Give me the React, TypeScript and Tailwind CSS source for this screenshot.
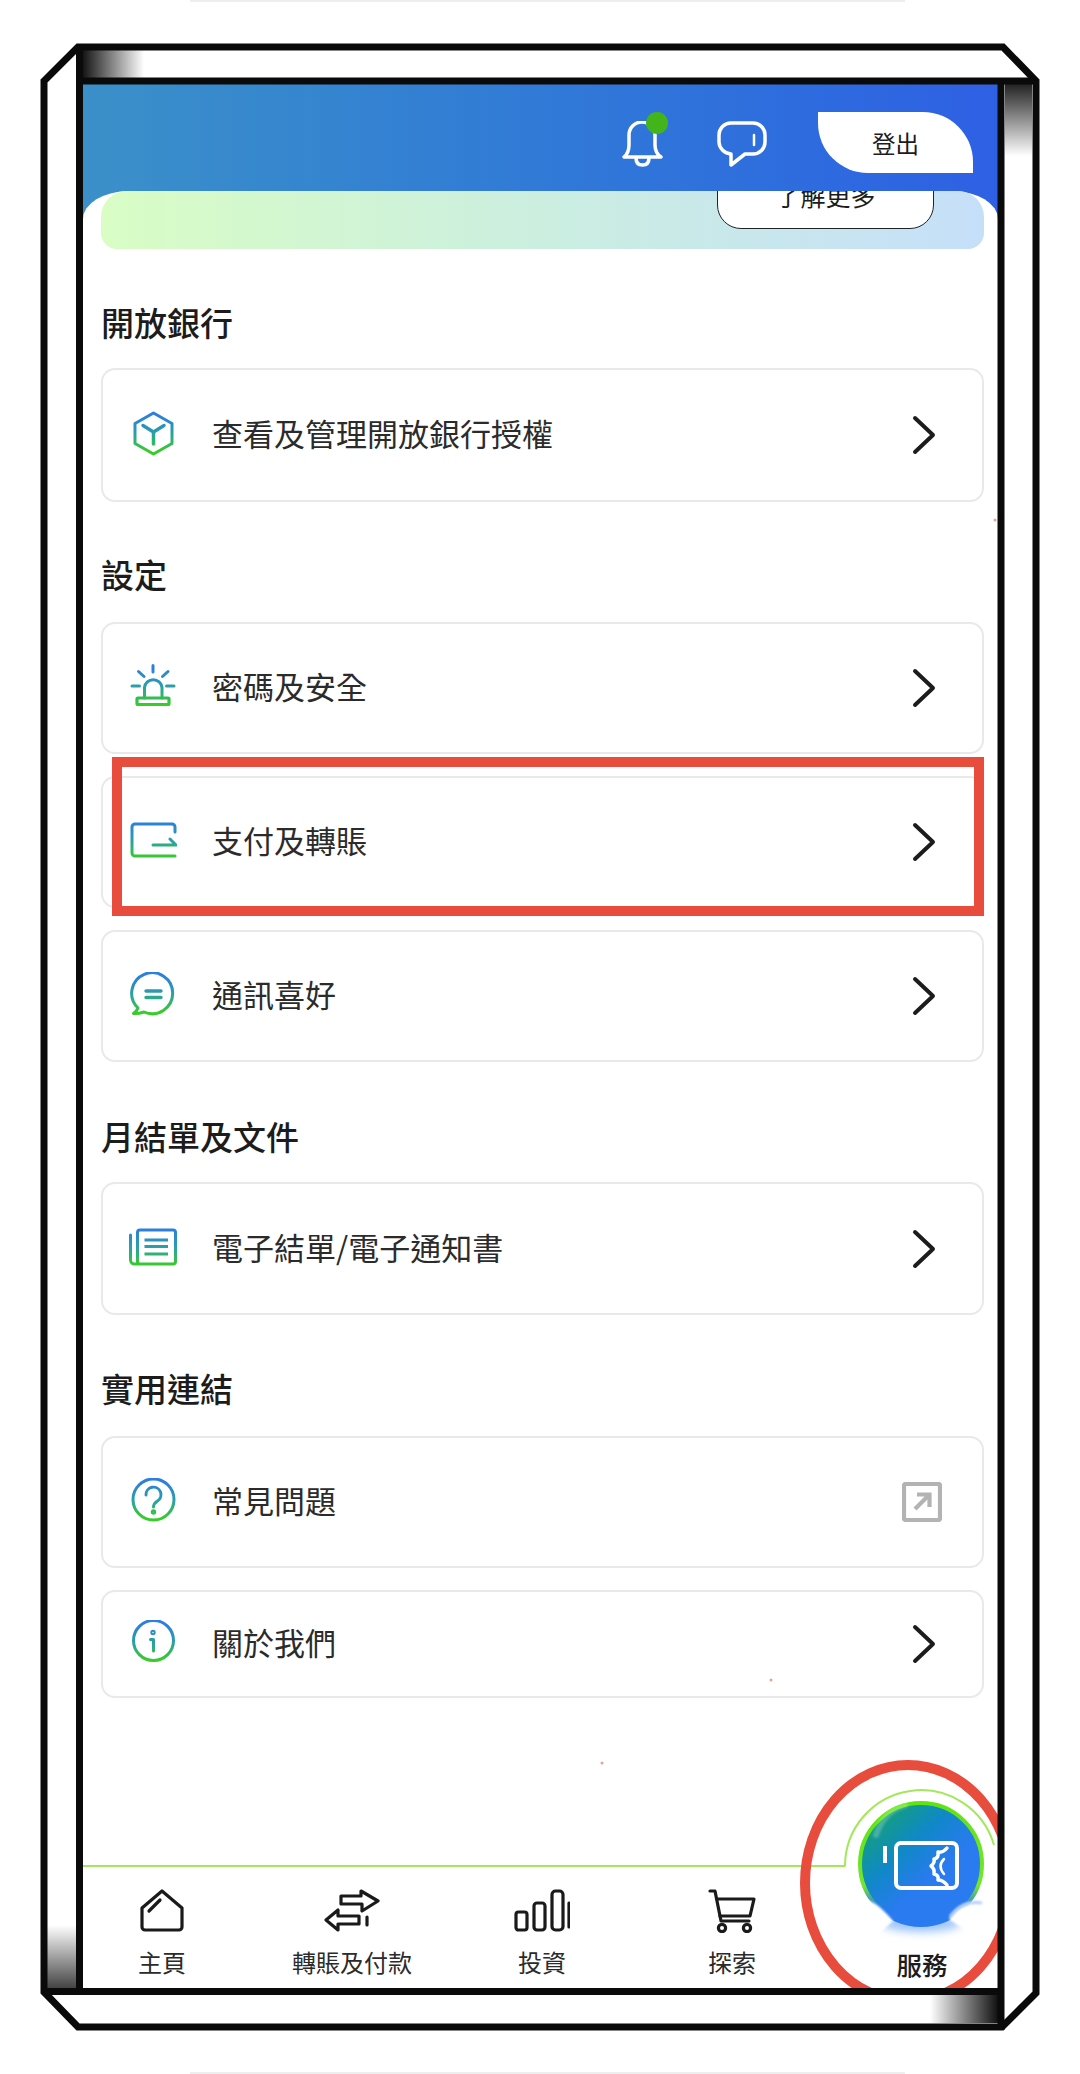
import { ReactNode, useId } from "react";

function GradIcon({ children }: { children: (stroke: string) => ReactNode }) {
  const id = useId().replace(/:/g, "");
  return (
    <svg width="48" height="48" viewBox="0 0 48 48" fill="none" strokeLinecap="round" strokeLinejoin="round" strokeWidth="3">
      <defs>
        <linearGradient id={id} gradientUnits="userSpaceOnUse" x1="0" y1="4" x2="0" y2="40">
          <stop offset="0" stopColor="#2c7fdc" />
          <stop offset="0.5" stopColor="#2a9fa8" />
          <stop offset="1" stopColor="#38cb2a" />
        </linearGradient>
      </defs>
      {children(`url(#${id})`)}
    </svg>
  );
}

const CubeIcon = () => (
  <GradIcon>
    {(s) => (
      <g stroke={s}>
        <path d="M24.5 2 L43 12.5 V32.5 L24.5 43 L6 32.5 V12.5 Z" />
        <path d="M14 14.5 L24.5 21 L35 14.5 M24.5 21 V33" strokeWidth="3.5" />
      </g>
    )}
  </GradIcon>
);

const SirenIcon = () => (
  <GradIcon>
    {(s) => (
      <g stroke={s}>
        <path d="M24 1.5 V8 M9.5 7.5 L15 12.5 M39 7.5 L33.5 12.5 M3 22 H10.5 M37.5 22 H45" />
        <path d="M15.5 34 V23.5 A8.8 8.8 0 0 1 33 23.5 V34" />
        <rect x="8" y="34" width="32" height="6.5" rx="1" strokeWidth="3.2" />
      </g>
    )}
  </GradIcon>
);

const PayIcon = () => (
  <GradIcon>
    {(s) => (
      <g stroke={s}>
        <path d="M46 14 V9 A3 3 0 0 0 43 6 H6 A3 3 0 0 0 3 9 V35 A3 3 0 0 0 6 38 H46" />
        <path d="M24 27 H47 L41 21" />
      </g>
    )}
  </GradIcon>
);

const ChatIcon = () => (
  <GradIcon>
    {(s) => (
      <g stroke={s}>
        <path d="M9 36 A20.5 20.5 0 1 1 15 40 Q9 42 4.5 41.5 Q8 39 9 36 Z" />
        <path d="M17 19 H32 M17 25.5 H32" strokeWidth="3.4" />
      </g>
    )}
  </GradIcon>
);

const DocIcon = () => (
  <GradIcon>
    {(s) => (
      <g stroke={s}>
        <rect x="8.5" y="5" width="38" height="34" rx="2.5" />
        <path d="M1.5 10 V35 A4 4 0 0 0 5.5 39 H9" />
        <path d="M15.5 15 H39 M15.5 21.5 H39 M15.5 29 H39" strokeLinecap="butt" />
      </g>
    )}
  </GradIcon>
);

const QuestionIcon = () => (
  <GradIcon>
    {(s) => (
      <g stroke={s}>
        <circle cx="24.5" cy="21.5" r="20.5" />
        <path d="M17 17 A7.5 7.5 0 1 1 28.5 23 C25.5 25 24.5 26 24.5 29" />
        <circle cx="24.5" cy="34" r="1.2" />
      </g>
    )}
  </GradIcon>
);

const InfoIcon = () => (
  <GradIcon>
    {(s) => (
      <g stroke={s}>
        <circle cx="24.5" cy="20.5" r="20" />
        <circle cx="24" cy="12.5" r="1" strokeWidth="3.4" />
        <path d="M21.5 19.5 H24.5 V31" />
      </g>
    )}
  </GradIcon>
);

const Chevron = () => (
  <svg width="40" height="40" viewBox="0 0 40 40" fill="none" stroke="#1c1c1c" strokeWidth="4" strokeLinecap="round" strokeLinejoin="round">
    <path d="M13 3 L31 20 L13 37" />
  </svg>
);

const ExternalIcon = () => (
  <svg width="40" height="40" viewBox="0 0 40 40" fill="none" stroke="#b3b3b3" strokeWidth="4.2">
    <rect x="2" y="2" width="36" height="36" rx="1.5" />
    <path d="M13 27 L26 14 M15 12.5 H27.5 V25" />
  </svg>
);

function HomeIcon() {
  return (
    <svg width="44" height="44" viewBox="0 0 44 44" fill="none" stroke="#1a1a1a" strokeWidth="3.2" strokeLinejoin="round" strokeLinecap="round">
      <path d="M22 2 L42 19 V38 A3 3 0 0 1 39 41 H5 A3 3 0 0 1 2 38 V19 Z" />
      <path d="M9 22 L20 11" />
    </svg>
  );
}

function TransferIcon() {
  return (
    <svg width="56" height="44" viewBox="0 0 56 44" fill="none" stroke="#1a1a1a" strokeWidth="3.2" strokeLinejoin="round" strokeLinecap="round">
      <path d="M17 7 H37 V2 L54 12 L38 22 V15 H17 Z" />
      <path d="M2 31 L14 21 V27 H35 V35 H14 V41 Z" />
      <path d="M43 28 V36" />
    </svg>
  );
}

function BarsIcon() {
  return (
    <svg width="56" height="44" viewBox="0 0 56 44" fill="none" stroke="#1a1a1a" strokeWidth="3.2" strokeLinecap="round">
      <rect x="2" y="23" width="11" height="18" rx="2.5" />
      <rect x="20" y="14" width="11" height="27" rx="3" />
      <rect x="38" y="2" width="11" height="39" rx="3.5" />
      <path d="M55 14 V38" />
    </svg>
  );
}

function CartIcon() {
  return (
    <svg width="48" height="44" viewBox="0 0 48 44" fill="none" stroke="#1a1a1a" strokeWidth="3.2" strokeLinejoin="round" strokeLinecap="round">
      <path d="M2 2 H7 L13 32 H41" />
      <path d="M9 10 H46 L42 27 H12" />
      <circle cx="14" cy="39" r="3.6" />
      <circle cx="39" cy="39" r="3.6" />
    </svg>
  );
}

function ServiceButton() {
  return (
    <svg className="absolute left-[707px] top-[-115px]" width="208" height="238" viewBox="790 1750 208 238" fill="none">
      <defs>
        <linearGradient id="fabFill" x1="0.15" y1="0.05" x2="0.75" y2="0.7">
          <stop offset="0" stopColor="#14a36f" />
          <stop offset="0.45" stopColor="#1088c8" />
          <stop offset="0.8" stopColor="#2a7af0" />
        </linearGradient>
        <linearGradient id="fabEdge" x1="0" y1="0" x2="0" y2="1">
          <stop offset="0" stopColor="#5fe40f" />
          <stop offset="0.68" stopColor="#74e62c" />
          <stop offset="0.85" stopColor="#2a7af0" />
        </linearGradient>
        <filter id="fabBlur" x="-30%" y="-60%" width="160%" height="220%">
          <feGaussianBlur stdDeviation="4" />
        </filter>
        <filter id="fabSoft" x="-30%" y="-30%" width="160%" height="160%">
          <feGaussianBlur stdDeviation="1.2" />
        </filter>
      </defs>
      <path d="M845 1866 A76 76 0 0 1 994 1845" stroke="#a3e85a" strokeWidth="2" />
      <ellipse cx="921" cy="1923" rx="40" ry="9" fill="#9cc4f7" filter="url(#fabBlur)" />
      <circle cx="921" cy="1864" r="61" fill="url(#fabFill)" stroke="url(#fabEdge)" strokeWidth="4" />
      <path d="M876 1835 Q884 1811 905 1805" stroke="#ffffff" strokeOpacity="0.22" strokeWidth="6" strokeLinecap="round" filter="url(#fabSoft)" />
      <path d="M852 1899 C868 1896 880 1905 893 1921 L872 1940 H852 Z" fill="#ffffff" filter="url(#fabSoft)" />
      <path d="M949 1919 C956 1908 966 1900 988 1902 V1932 H968 Z" fill="#ffffff" filter="url(#fabSoft)" />
      <path d="M950 1917 C957 1907 968 1901 982 1903" stroke="#b5d0f6" strokeWidth="3" filter="url(#fabSoft)" />
      <g stroke="#ffffff" strokeWidth="4" strokeLinecap="round" strokeLinejoin="round">
        <rect x="896" y="1843" width="61" height="45" rx="5" />
        <path d="M885 1846 V1863" strokeWidth="4" strokeLinecap="butt" />
        <path d="M947 1848 Q943 1853 938 1852 Q939 1858 934 1859 Q935 1863 931 1866 Q935 1869 934 1874 Q939 1875 938 1880 Q943 1880 947 1885" strokeWidth="3.5" />
        <path d="M944 1859 Q937 1866 944 1874" strokeWidth="2.5" />
      </g>
      <ellipse cx="908" cy="1883" rx="103" ry="118" stroke="#e74c3c" strokeWidth="10" />
    </svg>
  );
}

function DeviceFrame() {
  return (
    <svg className="absolute inset-0 pointer-events-none" width="1080" height="2074" viewBox="0 0 1080 2074" fill="none">
      <defs>
        <linearGradient id="shadeTL" x1="0" y1="0" x2="1" y2="0">
          <stop offset="0" stopColor="#111111" />
          <stop offset="1" stopColor="#ffffff" />
        </linearGradient>
        <linearGradient id="shadeTR" x1="0" y1="0" x2="0" y2="1">
          <stop offset="0" stopColor="#222222" />
          <stop offset="1" stopColor="#ffffff" />
        </linearGradient>
        <linearGradient id="shadeBL" x1="0" y1="0" x2="0" y2="1">
          <stop offset="0" stopColor="#ffffff" />
          <stop offset="1" stopColor="#444444" />
        </linearGradient>
        <linearGradient id="shadeBR" x1="0" y1="0" x2="1" y2="0">
          <stop offset="0" stopColor="#ffffff" />
          <stop offset="1" stopColor="#111111" />
        </linearGradient>
      </defs>
      <rect x="82" y="50" width="62" height="28" fill="url(#shadeTL)" />
      <rect x="1005" y="84" width="27" height="72" fill="url(#shadeTR)" />
      <rect x="47" y="1925" width="29" height="63" fill="url(#shadeBL)" />
      <rect x="930" y="1995" width="68" height="28" fill="url(#shadeBR)" />
      <g stroke="#0a0a0a" strokeWidth="7">
        <path d="M78 47 H1003 L1036 81 V1993 L1002 2027 H78 L44 1992 V81 Z" strokeLinejoin="miter" />
        <path d="M79.500 47 V1991 M79 81 H1036 M44 1991.500 H1001 M1001 84 V2030" />
      </g>
      <rect x="190" y="0" width="715" height="2" fill="#eeeeee" />
      <rect x="190" y="2072" width="715" height="2" fill="#eeeeee" />
      <circle cx="771" cy="1680" r="1.5" fill="#e9a29a" />
      <circle cx="602" cy="1763" r="1.5" fill="#e9a29a" />
      <circle cx="995" cy="520" r="1.5" fill="#e9a29a" />
    </svg>
  );
}

function Row({ icon, label, height, right }: { icon: ReactNode; label: string; height: string; right?: ReactNode }) {
  return (
    <div className={`${height} flex items-center rounded-[14px] border-2 border-[#e9e9e9] bg-white pl-[26px] pr-[40px]`}>
      <div className="w-[48px] h-[48px] shrink-0">{icon}</div>
      <span className="ml-[35px] flex-1 pb-[4px] text-[31px] leading-[44px] text-[#2b2b2b]">{label}</span>
      {right ?? <Chevron />}
    </div>
  );
}

function Title({ text, className }: { text: string; className: string }) {
  return <h2 className={`${className} h-[44px] text-[33px] leading-[38px] font-medium text-[#1c1c1c]`}>{text}</h2>;
}

function NavItem({ icon, label }: { icon: ReactNode; label: string }) {
  return (
    <div className="flex flex-col items-center">
      <div className="h-[44px] flex items-center justify-center">{icon}</div>
      <span className="mt-[14px] text-[24px] leading-[30px] text-[#2b2b2b]">{label}</span>
    </div>
  );
}

export default function App() {
  return (
    <div className="relative w-[1080px] h-[2074px] overflow-hidden bg-white pt-[84px] pl-[83px] font-['Noto_Sans_CJK_TC','Noto_Sans',sans-serif]">
      <div className="relative w-[915px] h-[1904px] flex flex-col overflow-hidden bg-white">
        {/* header */}
        <div className="h-[137px] shrink-0 bg-linear-to-r from-[#3b90c8] to-[#2e60e4] flex justify-end items-start pt-[28px] pr-[25px]">
          <div className="relative w-[40px] h-[46px] mt-[9px]">
            <svg width="42" height="46" viewBox="0 0 42 46" fill="none" stroke="#ffffff" strokeWidth="3.5" strokeLinejoin="round" strokeLinecap="round">
              <path d="M2 36 Q7 32 7 24 V14 A13 13 0 0 1 33 14 V24 Q33 32 39 36 Z" />
              <path d="M14 37 Q14 44 20.500 44 Q27 44 27 37" />
            </svg>
            <div className="absolute -top-[9px] left-[24px] w-[22px] h-[22px] rounded-full bg-[#43b51b]" />
          </div>
          <svg className="ml-[55px] mt-[9px]" width="50" height="46" viewBox="0 0 50 46" fill="none" stroke="#ffffff" strokeWidth="3.5" strokeLinejoin="round" strokeLinecap="round">
            <path d="M14 2 H36 A12 12 0 0 1 48 14 V21 A12 12 0 0 1 36 33 H28 L14 44 V33 A12.500 12.500 0 0 1 2 21 V14 A12 12 0 0 1 14 2 Z" />
            <path d="M37 14 V24" strokeWidth="2.5" />
          </svg>
          <button className="ml-[51px] w-[155px] h-[61px] bg-white rounded-tr-[50px] rounded-bl-[50px] text-[23.5px] leading-[58px] text-[#1c1c1c]">
            登出
          </button>
        </div>

        {/* content */}
        <div className="-mt-[30px] flex-1 bg-white rounded-tl-[46px_28px] rounded-tr-[46px_28px] pl-[18px] pr-[14px]">
          <div className="h-[58px] overflow-hidden rounded-t-[26px] rounded-b-[16px] bg-linear-to-r from-[#d9fdc4] via-[#cbeee0] to-[#c6dff9] flex justify-end pr-[50px]">
            <div className="-mt-[24px] w-[217px] h-[62px] shrink-0 rounded-[24px] border border-[#222222] bg-white text-center text-[25px] leading-[54px] text-[#1c1c1c]">
              了解更多
            </div>
          </div>

          <Title text="開放銀行" className="mt-[54px] mb-[21px]" />
          <Row icon={<CubeIcon />} label="查看及管理開放銀行授權" height="h-[134px]" />

          <Title text="設定" className="mt-[53px] mb-[23px]" />
          <div className="flex flex-col gap-[22px]">
            <Row icon={<SirenIcon />} label="密碼及安全" height="h-[132px]" />
            <Row icon={<PayIcon />} label="支付及轉賬" height="h-[132px]" />
            <Row icon={<ChatIcon />} label="通訊喜好" height="h-[132px]" />
          </div>

          <Title text="月結單及文件" className="mt-[55px] mb-[21px]" />
          <Row icon={<DocIcon />} label="電子結單/電子通知書" height="h-[133px]" />

          <Title text="實用連結" className="mt-[54px] mb-[23px]" />
          <div className="flex flex-col gap-[22px]">
            <Row icon={<QuestionIcon />} label="常見問題" height="h-[132px]" right={<ExternalIcon />} />
            <Row icon={<InfoIcon />} label="關於我們" height="h-[108px]" />
          </div>
        </div>

        {/* bottom nav */}
        <div className="relative h-[123px] shrink-0 bg-white">
          <div className="h-[2px] w-[762px] bg-[#a3e85a]" />
          <div className="-ml-4 w-[950px] grid grid-cols-5 pt-[22px]">
            <NavItem icon={<HomeIcon />} label="主頁" />
            <NavItem icon={<TransferIcon />} label="轉賬及付款" />
            <NavItem icon={<BarsIcon />} label="投資" />
            <NavItem icon={<CartIcon />} label="探索" />
            <div className="flex flex-col items-center pt-[44px]">
              <span className="mt-[16px] text-[25.5px] leading-[30px] font-medium text-[#1c1c1c]">服務</span>
            </div>
          </div>
          <ServiceButton />
        </div>
      </div>

      <div className="absolute left-[112px] top-[757px] w-[872px] h-[159px] border-[10px] border-[#e74c3c] pointer-events-none" />
      <DeviceFrame />
    </div>
  );
}
